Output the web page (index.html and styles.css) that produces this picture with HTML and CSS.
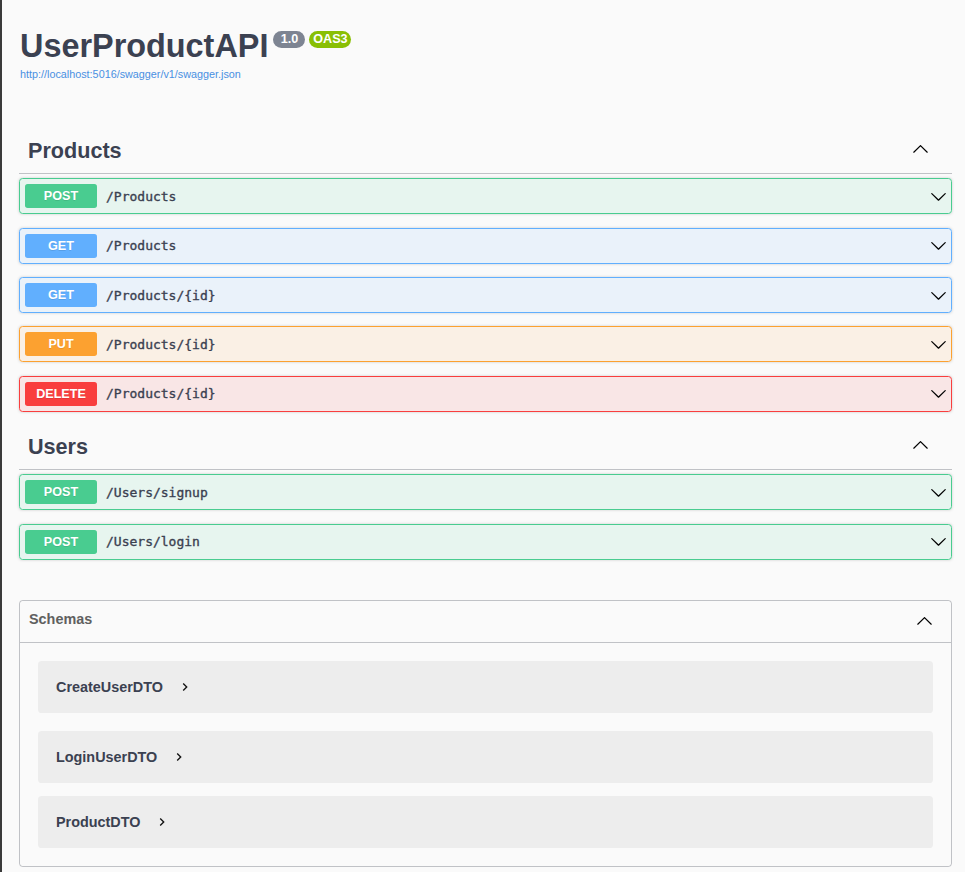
FILE: index.html
```html
<!DOCTYPE html>
<html lang="en">
<head>
<meta charset="utf-8">
<title>Swagger UI</title>
<link rel="stylesheet" href="styles.css">
</head>
<body>
<div class="wrapper">
  <div class="info">
    <h2 class="title">UserProductAPI<span class="badge badge-version">1.0</span><span class="badge badge-oas">OAS3</span></h2>
    <a class="url" href="#">http://localhost:5016/swagger/v1/swagger.json</a>
  </div>

  <section class="tag-section">
    <h3 class="tag">
      <span class="tag-name">Products</span>
      <svg class="tag-arrow" width="17" height="17" viewBox="0 0 20 20"><path d="M17.418 14.908c.272.268.709.268.979 0s.271-.701 0-.969l-7.908-7.83c-.27-.268-.707-.268-.979 0l-7.908 7.83c-.27.268-.27.701 0 .969.271.268.709.268.979 0L10 7.767l7.418 7.141z"/></svg>
    </h3>
    <div class="opblock op-post"><span class="method">POST</span><span class="path">/Products</span><svg class="op-arrow" width="17" height="17" viewBox="0 0 20 20"><path d="M17.418 6.109c.272-.268.709-.268.979 0s.271.701 0 .969l-7.908 7.83c-.27.268-.707.268-.979 0l-7.908-7.83c-.27-.268-.27-.701 0-.969.271-.268.709-.268.979 0L10 13.25l7.418-7.141z"/></svg></div>
    <div class="opblock op-get"><span class="method">GET</span><span class="path">/Products</span><svg class="op-arrow" width="17" height="17" viewBox="0 0 20 20"><path d="M17.418 6.109c.272-.268.709-.268.979 0s.271.701 0 .969l-7.908 7.83c-.27.268-.707.268-.979 0l-7.908-7.83c-.27-.268-.27-.701 0-.969.271-.268.709-.268.979 0L10 13.25l7.418-7.141z"/></svg></div>
    <div class="opblock op-get"><span class="method">GET</span><span class="path">/Products/{id}</span><svg class="op-arrow" width="17" height="17" viewBox="0 0 20 20"><path d="M17.418 6.109c.272-.268.709-.268.979 0s.271.701 0 .969l-7.908 7.83c-.27.268-.707.268-.979 0l-7.908-7.83c-.27-.268-.27-.701 0-.969.271-.268.709-.268.979 0L10 13.25l7.418-7.141z"/></svg></div>
    <div class="opblock op-put"><span class="method">PUT</span><span class="path">/Products/{id}</span><svg class="op-arrow" width="17" height="17" viewBox="0 0 20 20"><path d="M17.418 6.109c.272-.268.709-.268.979 0s.271.701 0 .969l-7.908 7.83c-.27.268-.707.268-.979 0l-7.908-7.83c-.27-.268-.27-.701 0-.969.271-.268.709-.268.979 0L10 13.25l7.418-7.141z"/></svg></div>
    <div class="opblock op-delete"><span class="method">DELETE</span><span class="path">/Products/{id}</span><svg class="op-arrow" width="17" height="17" viewBox="0 0 20 20"><path d="M17.418 6.109c.272-.268.709-.268.979 0s.271.701 0 .969l-7.908 7.83c-.27.268-.707.268-.979 0l-7.908-7.83c-.27-.268-.27-.701 0-.969.271-.268.709-.268.979 0L10 13.25l7.418-7.141z"/></svg></div>
  </section>

  <section class="tag-section">
    <h3 class="tag">
      <span class="tag-name">Users</span>
      <svg class="tag-arrow" width="17" height="17" viewBox="0 0 20 20"><path d="M17.418 14.908c.272.268.709.268.979 0s.271-.701 0-.969l-7.908-7.83c-.27-.268-.707-.268-.979 0l-7.908 7.83c-.27.268-.27.701 0 .969.271.268.709.268.979 0L10 7.767l7.418 7.141z"/></svg>
    </h3>
    <div class="opblock op-post"><span class="method">POST</span><span class="path">/Users/signup</span><svg class="op-arrow" width="17" height="17" viewBox="0 0 20 20"><path d="M17.418 6.109c.272-.268.709-.268.979 0s.271.701 0 .969l-7.908 7.83c-.27.268-.707.268-.979 0l-7.908-7.83c-.27-.268-.27-.701 0-.969.271-.268.709-.268.979 0L10 13.25l7.418-7.141z"/></svg></div>
    <div class="opblock op-post"><span class="method">POST</span><span class="path">/Users/login</span><svg class="op-arrow" width="17" height="17" viewBox="0 0 20 20"><path d="M17.418 6.109c.272-.268.709-.268.979 0s.271.701 0 .969l-7.908 7.83c-.27.268-.707.268-.979 0l-7.908-7.83c-.27-.268-.27-.701 0-.969.271-.268.709-.268.979 0L10 13.25l7.418-7.141z"/></svg></div>
  </section>

  <section class="models">
    <h4 class="models-head">
      <span>Schemas</span>
      <svg class="models-arrow" width="17" height="17" viewBox="0 0 20 20"><path d="M17.418 14.908c.272.268.709.268.979 0s.271-.701 0-.969l-7.908-7.83c-.27-.268-.707-.268-.979 0l-7.908 7.83c-.27.268-.27.701 0 .969.271.268.709.268.979 0L10 7.767l7.418 7.141z"/></svg>
    </h4>
    <div class="model first"><span class="model-title">CreateUserDTO</span><svg class="model-toggle" width="16" height="16" viewBox="0 0 24 24"><path d="M10 6 8.59 7.41 13.170 12l-4.58 4.59L10 18l6-6z"/></svg></div>
    <div class="model"><span class="model-title">LoginUserDTO</span><svg class="model-toggle" width="16" height="16" viewBox="0 0 24 24"><path d="M10 6 8.59 7.41 13.17 12l-4.58 4.59L10 18l6-6z"/></svg></div>
    <div class="model last"><span class="model-title">ProductDTO</span><svg class="model-toggle" width="16" height="16" viewBox="0 0 24 24"><path d="M10 6 8.59 7.41 13.17 12l-4.58 4.59L10 18l6-6z"/></svg></div>
  </section>
</div>
</body>
</html>
```

FILE: styles.css
```css
* { box-sizing: border-box; }

html, body {
  margin: 0;
  min-height: 100%;
}

body {
  background: #fafafa;
  border-left: 2px solid #3a3a3a;
  min-height: 100vh;
  font-family: "Liberation Sans", Arial, sans-serif;
  color: #3b4151;
}

.wrapper {
  padding: 0 13px 0 17px;
}

.info {
  padding-top: 28px;
  padding-left: 1px;
}

.title {
  display: flex;
  align-items: flex-start;
  margin: 0;
  font-size: 32.4px;
  line-height: 37px;
  font-weight: 700;
  color: #3b4151;
}

.badge {
  display: inline-block;
  height: 17px;
  line-height: 17px;
  margin-top: 3px;
  border-radius: 9px;
  text-align: center;
  font-size: 12.6px;
  font-weight: 700;
  color: #fff;
}

.badge-version {
  width: 32px;
  background: #7d8492;
  margin-left: 5px;
}

.badge-oas {
  width: 42px;
  background: #89bf04;
  margin-left: 4px;
}

.url {
  display: block;
  margin-top: 3px;
  font-size: 10.8px;
  line-height: 12.4px;
  color: #4990e2;
  text-decoration: none;
}

.tag-section:first-of-type {
  margin-top: 48.5px;
}

.tag {
  display: flex;
  align-items: center;
  justify-content: space-between;
  margin: 0 0 4px;
  padding: 9px 18px 9px 9px;
  min-height: 45.5px;
  border-bottom: 1px solid rgba(59, 65, 81, 0.3);
  font-size: 21.6px;
  font-weight: 700;
  color: #3b4151;
}

.tag-arrow {
  margin-right: 5px;
  margin-bottom: 6px;
  fill: #000;
}

.opblock {
  display: flex;
  align-items: center;
  height: 36px;
  padding: 5px 4px 5px 5px;
  margin-bottom: 13.3px;
  border: 1px solid;
  border-radius: 3.6px;
  box-shadow: 0 0 3px rgba(0, 0, 0, 0.19);
}

.method {
  width: 72px;
  height: 24px;
  line-height: 24px;
  border-radius: 2.7px;
  text-align: center;
  font-size: 12.6px;
  font-weight: 700;
  color: #fff;
  text-shadow: 0 1px 0 rgba(0, 0, 0, 0.1);
}

.path {
  flex: 1;
  padding: 0 9px;
  font-family: "DejaVu Sans Mono", "Liberation Mono", monospace;
  font-size: 13px;
  font-weight: 400;
  -webkit-text-stroke: 0.35px #3b4151;
  color: #3b4151;
}

.op-arrow {
  fill: #000;
}

.op-post { background: rgba(73, 204, 144, 0.1); border-color: #49cc90; }
.op-post .method { background: #49cc90; }
.op-get { background: rgba(97, 175, 254, 0.1); border-color: #61affe; }
.op-get .method { background: #61affe; }
.op-put { background: rgba(252, 161, 48, 0.1); border-color: #fca130; }
.op-put .method { background: #fca130; }
.op-delete { background: rgba(249, 62, 62, 0.1); border-color: #f93e3e; }
.op-delete .method { background: #f93e3e; }

.models {
  margin-top: 40px;
  border: 1px solid rgba(59, 65, 81, 0.3);
  border-radius: 3.6px;
}

.models-head {
  display: flex;
  align-items: center;
  justify-content: space-between;
  margin: 0;
  height: 42px;
  padding: 7px 18px 11px 9px;
  border-bottom: 1px solid rgba(59, 65, 81, 0.3);
  font-size: 14.4px;
  font-weight: 700;
  color: #606060;
}

.models-arrow {
  fill: #000;
  margin-top: 3px;
}

.model {
  display: flex;
  align-items: center;
  height: 52px;
  margin: 0 18px 13px;
  padding: 0 18px;
  background: rgba(0, 0, 0, 0.05);
  border-radius: 3.6px;
}

.model.first { margin-top: 18px; margin-bottom: 18px; }
.model.last { margin-bottom: 18px; }

.model-title {
  font-size: 14.4px;
  font-weight: 700;
  color: #3b4151;
}

.model-toggle {
  margin-left: 14px;
  fill: #111;
}
```
